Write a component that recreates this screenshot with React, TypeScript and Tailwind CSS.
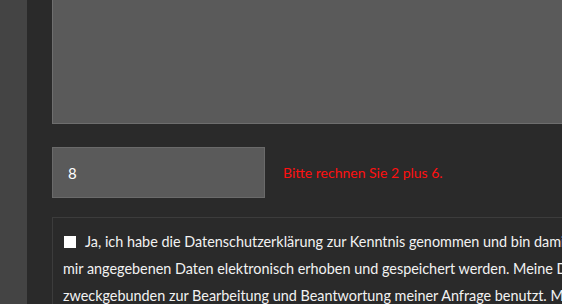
export default function App() {
  return (
    <div
      className="flex h-[304px] w-[562px] overflow-hidden bg-[#2a2a2a]"
      style={{ fontFamily: "Lato, 'Open Sans', sans-serif" }}
    >
      <div className="w-[27px] shrink-0 bg-[#444444]" />
      <div className="flex min-w-0 flex-1 flex-col pl-[25px]">
        <textarea
          readOnly
          className="-mt-[10px] h-[134px] w-[600px] shrink-0 resize-none border border-[#6e6e6e] bg-[#5a5a5a] outline-none"
        />
        <div className="mt-[23px] flex shrink-0 items-center">
          <input
            readOnly
            value="8"
            className="h-[51px] w-[213px] border border-[#6a6a6a] bg-[#5a5a5a] px-[15px] text-[15px] text-white outline-none"
          />
          <span className="ml-[18px] text-[14px] text-[#ff1010]">Bitte rechnen Sie 2 plus 6.</span>
        </div>
        <div className="mt-[19px] w-[700px] shrink-0 border border-[#3c3c3c] pl-[10px] pt-[10px] text-[14.4px] leading-[27px] text-[#f2f2f2]">
          <div className="flex items-center whitespace-nowrap">
            <span className="mr-[9px] ml-[1px] inline-block h-[12px] w-[12px] shrink-0 bg-white" />
            <span>Ja, ich habe die Datenschutzerklärung zur Kenntnis genommen und bin damit einverstanden, dass die von</span>
          </div>
          <div className="whitespace-nowrap">
            mir angegebenen Daten elektronisch erhoben und gespeichert werden. Meine Daten werden dabei nur streng
          </div>
          <div className="whitespace-nowrap">
            zweckgebunden zur Bearbeitung und Beantwortung meiner Anfrage benutzt. Mit dem Absenden des Formulars
          </div>
        </div>
      </div>
    </div>
  );
}
